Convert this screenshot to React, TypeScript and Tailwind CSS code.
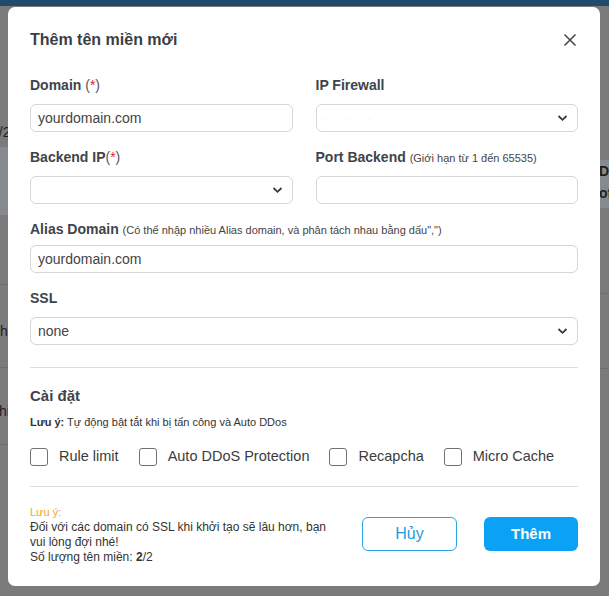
import React from 'react';

const Req: React.FC = () => (
  <span className="font-normal text-[#555]">
    (<span className="text-[#e0242f]">*</span>)
  </span>
);

const Chevron: React.FC = () => (
  <svg width="11" height="7" viewBox="0 0 11 7" className="pointer-events-none absolute right-[9px] top-1/2 -translate-y-1/2">
    <path d="M1.5 1.5 L5.5 5.3 L9.5 1.5" fill="none" stroke="#3a3a3a" strokeWidth="1.8" />
  </svg>
);

const Field: React.FC<{ value?: string; select?: boolean; blurred?: boolean }> = ({ value, select, blurred }) => (
  <div className="relative h-[28px] rounded-[6px] border border-[#d6d6d6] bg-white px-[7px] flex items-center text-[14px] text-[#444]">
    {value && <span>{value}</span>}
    {blurred && <span className="text-[#d6d6d6] blur-[1.5px] text-[10px] tracking-[8px]">· · ·</span>}
    {select && <Chevron />}
  </div>
);

const Label: React.FC<{ children: React.ReactNode; className?: string }> = ({ children, className }) => (
  <div className={`h-[20px] leading-[20px] text-[14px] font-bold text-[#40444a] whitespace-nowrap ${className ?? ''}`}>
    {children}
  </div>
);

const Check: React.FC<{ label: string }> = ({ label }) => (
  <label className="flex items-center gap-[11px]">
    <span className="w-[18px] h-[18px] rounded-[3px] border border-[#727272] bg-white" />
    <span className="text-[14.5px] text-[#3c3c3c]">{label}</span>
  </label>
);

const App: React.FC = () => {
  return (
    <div className="relative w-[609px] h-[596px] overflow-hidden bg-[#7b7b7b]" style={{ fontFamily: '"Liberation Sans", Arial, sans-serif' }}>
      {/* dimmed page behind the modal */}
      <div className="h-[6px] bg-[#1f4c6d]" />
      <div className="flex justify-between h-[590px]">
        <div className="w-[20px] flex flex-col text-[14px] text-[#1e1e1e]">
          <div className="h-[141px] flex items-end pb-[4px]">
            <span className="-ml-[9px]">2/2</span>
          </div>
          <div className="h-[68px] bg-[#868a8f]" />
          <div className="h-[70px] border-b border-[#6f6f6f]" />
          <div className="h-[83px] border-b border-[#6f6f6f] flex items-center pt-[10px]">
            <span className="-ml-[4px]">.h</span>
          </div>
          <div className="h-[77px] border-b border-[#6f6f6f] flex items-center pt-[10px]">
            <span className="-ml-[1px]">hi</span>
          </div>
        </div>
        <div className="w-[20px] flex flex-col text-[14px] font-bold text-[#1e1e1e]">
          <div className="h-[154px]" />
          <div className="h-[48px] bg-[#868a8f] pl-[10px] leading-[22px]">
            <div>D</div>
            <div>of</div>
          </div>
          <div className="h-[86px] border-b border-[#6f6f6f]" />
          <div className="h-[75px] border-b border-[#6f6f6f]" />
        </div>
      </div>

      {/* modal */}
      <div className="absolute left-[8px] top-[7px] w-[592px] h-[579px] rounded-[7px] bg-white px-[22px] pt-[23px]">
        <div className="h-[20px] flex items-center justify-between">
          <h2 className="text-[16px] font-bold text-[#3b3f44] leading-[20px]">Thêm tên miền mới</h2>
          <svg width="14" height="14" viewBox="0 0 14 14" className="mr-[1px]">
            <path d="M1.5 1.5 L12.5 12.5 M12.5 1.5 L1.5 12.5" stroke="#4a4a4a" strokeWidth="1.6" />
          </svg>
        </div>

        <div className="mt-[25px] grid grid-cols-2 gap-x-[23px] gap-y-[15px]">
          <div>
            <Label className="mb-[9px]">
              Domain <Req />
            </Label>
            <Field value="yourdomain.com" />
          </div>
          <div>
            <Label className="mb-[9px]">IP Firewall</Label>
            <Field select blurred />
          </div>
          <div>
            <Label className="mb-[9px]">
              Backend IP<Req />
            </Label>
            <Field select />
          </div>
          <div>
            <Label className="mb-[9px]">
              Port Backend <span className="text-[11px] font-normal text-[#444]">(Giới hạn từ 1 đến 65535)</span>
            </Label>
            <Field />
          </div>
        </div>

        <div className="mt-[15px]">
          <Label className="mb-[6px]">
            Alias Domain{' '}
            <span className="text-[11px] font-normal text-[#444]">
              (Có thể nhập nhiều Alias domain, và phân tách nhau bằng dấu",")
            </span>
          </Label>
          <Field value="yourdomain.com" />
        </div>

        <div className="mt-[15px]">
          <Label className="mb-[9px]">SSL</Label>
          <Field value="none" select />
        </div>

        <div className="mt-[22px] border-t border-[#dedede]" />

        <div className="mt-[18px] h-[20px] leading-[20px] text-[15px] font-bold text-[#40444a]">Cài đặt</div>
        <div className="mt-[8px] h-[16px] leading-[16px] text-[11px] text-[#333]">
          <span className="font-bold">Lưu ý:</span> Tự động bật tắt khi bị tấn công và Auto DDos
        </div>

        <div className="mt-[16px] h-[22px] flex items-center gap-[20px]">
          <Check label="Rule limit" />
          <Check label="Auto DDoS Protection" />
          <Check label="Recapcha" />
          <Check label="Micro Cache" />
        </div>

        <div className="mt-[18px] border-t border-[#dedede]" />

        <div className="mt-[18px] flex items-center justify-between">
          <div className="text-[12px] leading-[15px] text-[#333]">
            <div className="text-[11px] text-[#f2a530]">Lưu ý:</div>
            <div>
              Đối với các domain có SSL khi khởi tạo sẽ lâu hơn, bạn
              <br />
              vui lòng đợi nhé!
            </div>
            <div>
              Số lượng tên miền: <span className="font-bold">2</span>/2
            </div>
          </div>
          <div className="flex items-center gap-[27px] -mt-[2px]">
            <button className="w-[95px] h-[34px] rounded-[6px] border border-[#2aa3ec] text-[16px] text-[#1f9be6] bg-white">
              Hủy
            </button>
            <button className="w-[94px] h-[34px] rounded-[6px] bg-[#0ba2f6] text-[15px] font-semibold text-white">
              Thêm
            </button>
          </div>
        </div>
      </div>
    </div>
  );
};

export default App;
